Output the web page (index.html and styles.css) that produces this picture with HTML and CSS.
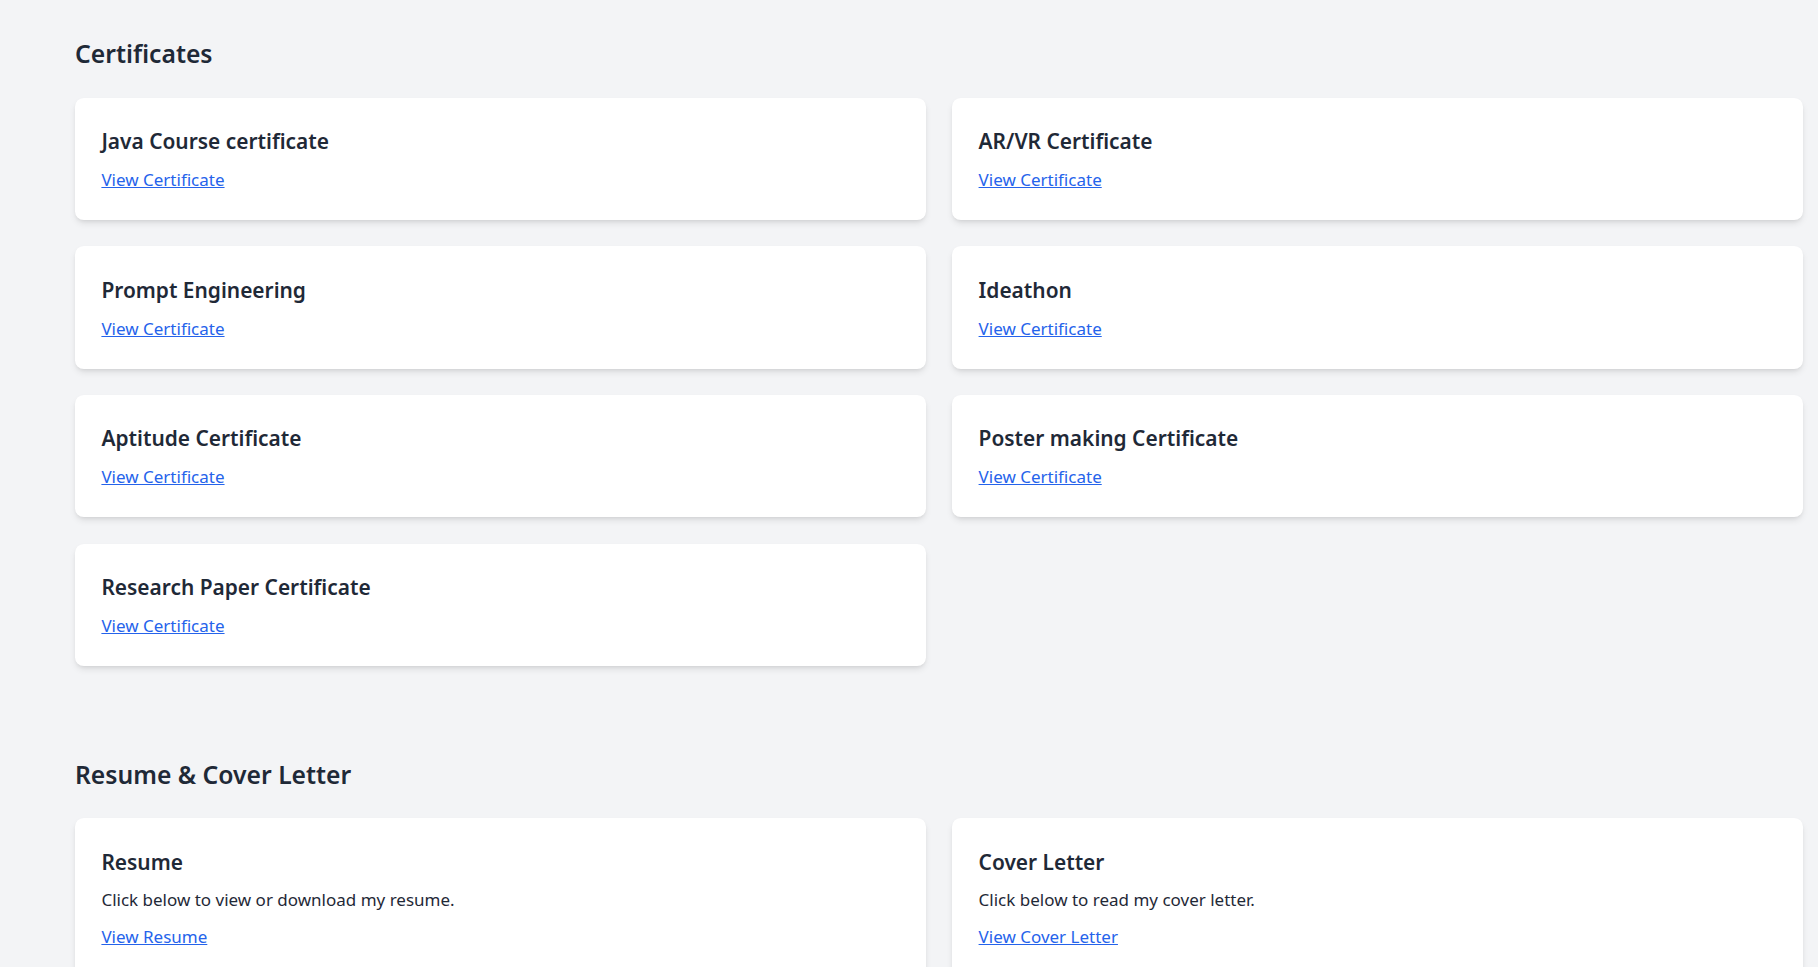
FILE: index.html
```html
<!DOCTYPE html>
<html lang="en">
<head>
<meta charset="utf-8">
<title>Certificates</title>
<link rel="stylesheet" href="styles.css">
</head>
<body>
<main class="page">
  <section class="section section-certs">
    <h2 class="section-title">Certificates</h2>
    <div class="grid">
      <div class="card"><h3 class="card-title">Java Course certificate</h3><a class="card-link" href="#">View Certificate</a></div>
      <div class="card"><h3 class="card-title">AR/VR Certificate</h3><a class="card-link" href="#">View Certificate</a></div>
      <div class="card"><h3 class="card-title">Prompt Engineering</h3><a class="card-link" href="#">View Certificate</a></div>
      <div class="card"><h3 class="card-title">Ideathon</h3><a class="card-link" href="#">View Certificate</a></div>
      <div class="card"><h3 class="card-title">Aptitude Certificate</h3><a class="card-link" href="#">View Certificate</a></div>
      <div class="card"><h3 class="card-title">Poster making Certificate</h3><a class="card-link" href="#">View Certificate</a></div>
      <div class="card"><h3 class="card-title">Research Paper Certificate</h3><a class="card-link" href="#">View Certificate</a></div>
    </div>
  </section>
  <section class="section section-docs">
    <h2 class="section-title">Resume &amp; Cover Letter</h2>
    <div class="grid">
      <div class="card"><h3 class="card-title">Resume</h3><p class="card-text">Click below to view or download my resume.</p><a class="card-link" href="#">View Resume</a></div>
      <div class="card"><h3 class="card-title">Cover Letter</h3><p class="card-text">Click below to read my cover letter.</p><a class="card-link" href="#">View Cover Letter</a></div>
    </div>
  </section>
</main>
</body>
</html>
```
FILE: styles.css
```css
* { box-sizing: border-box; }
html, body { margin: 0; padding: 0; }
body {
  background: #f3f4f6;
  color: #1f2937;
  font-family: "Noto Sans", "Open Sans", sans-serif;
  overflow: hidden;
}
.page {
  padding: 0 15px 0 75px;
}
.section-certs { padding-top: 36.3px; }
.section-docs { padding-top: 90.8px; }
.section-title {
  margin: 0 0 26.4px 0;
  font-size: 24.7px;
  line-height: 35.2px;
  font-weight: 600;
}
.grid {
  display: grid;
  grid-template-columns: 1fr 1fr;
  gap: 26.4px;
}
.card {
  background: #fff;
  border-radius: 8.8px;
  padding: 28.4px 26.4px 26.6px 26.4px;
  box-shadow: 0 4px 7px -1px rgba(0,0,0,0.1), 0 2px 4px -2px rgba(0,0,0,0.1);
}
.card-title {
  margin: 0 0 10px 0;
  font-size: 20.9px;
  line-height: 30.8px;
  font-weight: 600;
}
.card-text {
  margin: 0 0 10px 0;
  font-size: 17px;
  line-height: 26.4px;
}
.card-link {
  display: inline-block;
  font-size: 17px;
  line-height: 26.4px;
  color: #2563eb;
  text-decoration: underline;
}
```
